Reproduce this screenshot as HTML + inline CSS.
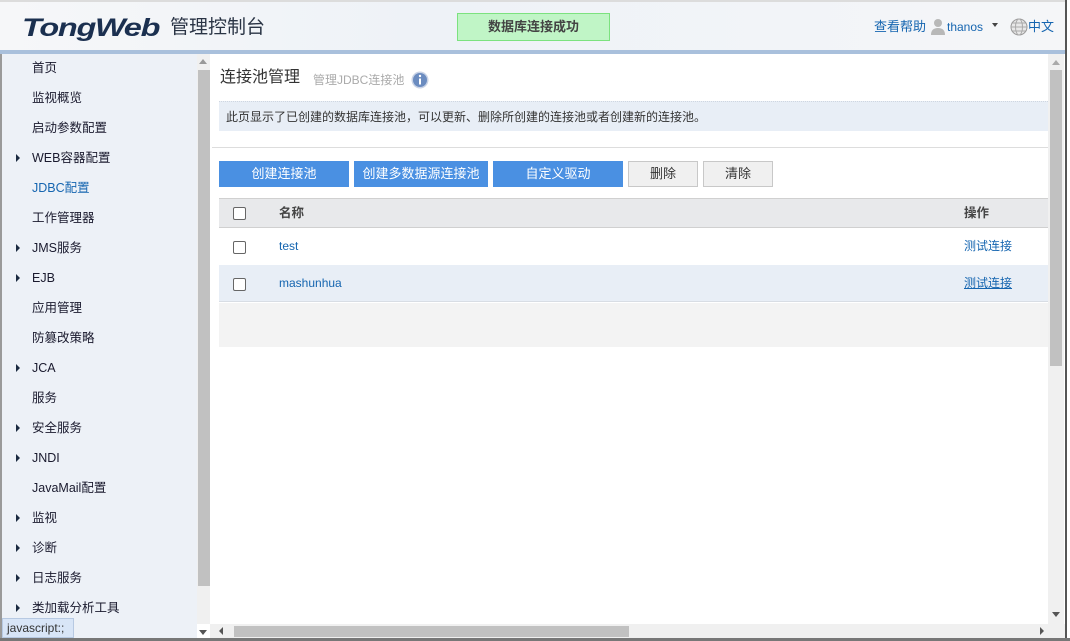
<!DOCTYPE html>
<html><head><meta charset="utf-8"><style>
*{margin:0;padding:0;box-sizing:border-box}
body{width:1070px;height:641px;overflow:hidden;background:#fff;font-family:"Liberation Sans","Noto Sans CJK SC",sans-serif;font-size:12px;line-height:16px;color:#222;position:relative}
.abs{position:absolute}
#hdr{left:0;top:0;width:1065px;height:50px;background:linear-gradient(90deg,#f6f7f9,#eef2f7 40%,#f5f6f8);border-top:2px solid #dcdcdc}
#hdrline{left:0;top:50px;width:1065px;height:4px;background:#a9c0dc}
.logo{left:22px;top:14px;font-size:25px;line-height:28px;font-weight:bold;font-style:italic;color:#1b3050;font-family:"Liberation Sans",sans-serif;transform:scaleX(1.3);transform-origin:0 0;letter-spacing:-1px}
.logo2{left:170px;top:15px;font-size:19px;line-height:26px;color:#2a3445}
.msg{left:457px;top:13px;width:153px;height:28px;background:#c0f5c6;border:1px solid #7ce27f;text-align:center;line-height:26px;font-size:13px;font-weight:bold;color:#444}
.tr{top:18px;font-size:13px;line-height:18px;color:#1565b0}
#side{left:0;top:54px;width:197px;height:587px;background:#edf1f7;border-left:2px solid #9a9a9a}
.nav{position:absolute;left:30px;font-size:12.5px;line-height:16px;height:16px;color:#1a1a2e;white-space:nowrap}
.arr{position:absolute;left:14px;width:0;height:0;border-left:4px solid #1a2a40;border-top:4px solid transparent;border-bottom:4px solid transparent}
#sscroll{left:197px;top:54px;width:13px;height:570px;background:#f0f0f0}
#main{left:210px;top:54px;width:838px;height:570px;background:#fff}
.btn{position:absolute;top:161px;height:26px;background:#4a90e2;color:#fff;text-align:center;line-height:26px;font-size:13px}
.gbtn{position:absolute;top:161px;height:26px;background:#f0f0f0;border:1px solid #c8c8c8;color:#333;text-align:center;line-height:24px;font-size:13px}
.cb{position:absolute;left:233px;width:13px;height:13px;border:1px solid #666;border-radius:2px;background:#fff}
a{color:#1565b0;text-decoration:none}
</style></head><body>
<div id="hdr" class="abs"></div>
<div id="hdrline" class="abs"></div>
<div class="abs logo">TongWeb</div>
<div class="abs logo2">管理控制台</div>
<div class="abs msg">数据库连接成功</div>
<div class="abs tr" style="left:874px">查看帮助</div>
<svg class="abs" style="left:930px;top:18px" width="16" height="18"><circle cx="8" cy="5" r="4" fill="#b8b8b8"/><path d="M1 17 Q1 10 8 10 Q15 10 15 17Z" fill="#b8b8b8"/></svg>
<div class="abs tr" style="left:947px;font-size:12px">thanos</div>
<div class="abs" style="left:992px;top:23px;border-top:4px solid #444;border-left:3px solid transparent;border-right:3px solid transparent"></div>
<svg class="abs" style="left:1010px;top:18px" width="18" height="18"><circle cx="9" cy="9" r="8" fill="#e8e8e8" stroke="#999"/><ellipse cx="9" cy="9" rx="3.5" ry="8" fill="none" stroke="#aaa"/><path d="M1 9H17M2.5 5H15.5M2.5 13H15.5" stroke="#aaa"/></svg>
<div class="abs tr" style="left:1028px">中文</div>
<div class="abs" style="left:1065px;top:0;width:2px;height:641px;background:#555"></div>
<div class="abs" style="left:1067px;top:0;width:3px;height:641px;background:#fff"></div>

<div id="side" class="abs">
<div class="nav" style="top:6px">首页</div>
<div class="nav" style="top:36px">监视概览</div>
<div class="nav" style="top:66px">启动参数配置</div>
<div class="arr" style="top:100px"></div><div class="nav" style="top:96px">WEB容器配置</div>
<div class="nav" style="top:126px;color:#1565b0">JDBC配置</div>
<div class="nav" style="top:156px">工作管理器</div>
<div class="arr" style="top:190px"></div><div class="nav" style="top:186px">JMS服务</div>
<div class="arr" style="top:220px"></div><div class="nav" style="top:216px">EJB</div>
<div class="nav" style="top:246px">应用管理</div>
<div class="nav" style="top:276px">防篡改策略</div>
<div class="arr" style="top:310px"></div><div class="nav" style="top:306px">JCA</div>
<div class="nav" style="top:336px">服务</div>
<div class="arr" style="top:370px"></div><div class="nav" style="top:366px">安全服务</div>
<div class="arr" style="top:400px"></div><div class="nav" style="top:396px">JNDI</div>
<div class="nav" style="top:426px">JavaMail配置</div>
<div class="arr" style="top:460px"></div><div class="nav" style="top:456px">监视</div>
<div class="arr" style="top:490px"></div><div class="nav" style="top:486px">诊断</div>
<div class="arr" style="top:520px"></div><div class="nav" style="top:516px">日志服务</div>
<div class="arr" style="top:550px"></div><div class="nav" style="top:546px">类加载分析工具</div>
</div>
<div id="sscroll" class="abs"></div>
<div class="abs" style="left:198px;top:70px;width:12px;height:516px;background:#c1c1c1"></div>
<div class="abs" style="left:199px;top:59px;border-bottom:5px solid #999;border-left:4px solid transparent;border-right:4px solid transparent"></div>
<div class="abs" style="left:199px;top:630px;border-top:5px solid #555;border-left:4px solid transparent;border-right:4px solid transparent"></div>
<div class="abs" style="left:2px;top:618px;width:72px;height:20px;background:#d8e5f7;border:1px solid #b7c9e2;font-size:12px;line-height:18px;padding-left:4px;color:#333">javascript:;</div>

<div id="main" class="abs"></div>
<div class="abs" style="left:220px;top:68px;font-size:16px;line-height:20px;color:#333">连接池管理</div>
<div class="abs" style="left:313px;top:72px;font-size:12px;line-height:16px;color:#aaa">管理JDBC连接池</div>
<svg class="abs" style="left:411px;top:71px" width="18" height="18"><circle cx="9" cy="9" r="8.5" fill="#c9d3e6"/><circle cx="9" cy="9" r="7" fill="#6b8cc0"/><rect x="8" y="7.5" width="2" height="6" fill="#fff"/><circle cx="9" cy="5" r="1.2" fill="#fff"/></svg>
<div class="abs" style="left:219px;top:101px;width:829px;height:30px;background:#e8eef6;border-top:1px dotted #cfd6e0;font-size:12px;line-height:30px;padding-left:7px;color:#333">此页显示了已创建的数据库连接池，可以更新、删除所创建的连接池或者创建新的连接池。</div>
<div class="abs" style="left:212px;top:147px;width:836px;height:1px;background:#ddd"></div>
<div class="btn" style="left:219px;width:130px">创建连接池</div>
<div class="btn" style="left:354px;width:134px">创建多数据源连接池</div>
<div class="btn" style="left:493px;width:130px">自定义驱动</div>
<div class="gbtn" style="left:628px;width:70px">删除</div>
<div class="gbtn" style="left:703px;width:70px">清除</div>
<div class="abs" style="left:219px;top:198px;width:829px;height:30px;background:#e8e9eb;border-top:1px solid #d0d0d0;border-bottom:1px solid #d0d0d0"></div>
<div class="cb" style="top:207px"></div>
<div class="abs" style="left:279px;top:205px;font-weight:bold;font-size:12.5px;color:#444">名称</div>
<div class="abs" style="left:964px;top:205px;font-weight:bold;font-size:12.5px;color:#444">操作</div>
<div class="cb" style="top:241px"></div>
<div class="abs" style="left:279px;top:238px"><a>test</a></div>
<div class="abs" style="left:964px;top:238px"><a>测试连接</a></div>
<div class="abs" style="left:219px;top:265px;width:829px;height:37px;background:#e8eef6;border-bottom:1px solid #d8dde4"></div>
<div class="cb" style="top:278px"></div>
<div class="abs" style="left:279px;top:275px"><a>mashunhua</a></div>
<div class="abs" style="left:964px;top:275px"><a style="text-decoration:underline">测试连接</a></div>
<div class="abs" style="left:219px;top:303px;width:829px;height:44px;background:#f3f3f3"></div>

<div class="abs" style="left:1048px;top:54px;width:16px;height:570px;background:#f0f0f0"></div>
<div class="abs" style="left:1050px;top:70px;width:12px;height:296px;background:#c1c1c1"></div>
<div class="abs" style="left:1052px;top:60px;border-bottom:5px solid #aaa;border-left:4px solid transparent;border-right:4px solid transparent"></div>
<div class="abs" style="left:1052px;top:612px;border-top:5px solid #555;border-left:4px solid transparent;border-right:4px solid transparent"></div>
<div class="abs" style="left:210px;top:624px;width:855px;height:14px;background:#f0f0f0"></div>
<div class="abs" style="left:234px;top:626px;width:395px;height:11px;background:#c1c1c1"></div>
<div class="abs" style="left:219px;top:627px;border-right:4px solid #555;border-top:4px solid transparent;border-bottom:4px solid transparent"></div>
<div class="abs" style="left:1040px;top:627px;border-left:4px solid #555;border-top:4px solid transparent;border-bottom:4px solid transparent"></div>
<div class="abs" style="left:0;top:638px;width:1070px;height:3px;background:#777"></div>
</body></html>
